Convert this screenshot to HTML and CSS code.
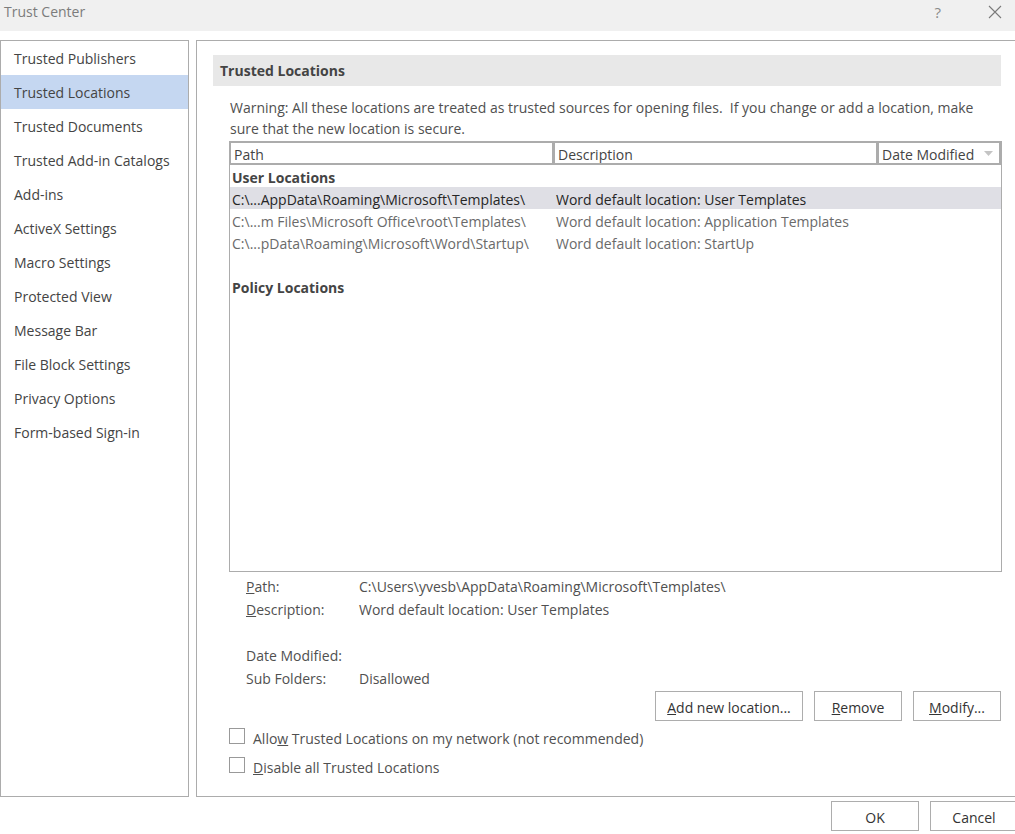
FILE: index.html
```html
<!DOCTYPE html>
<html>
<head>
<meta charset="utf-8">
<link rel="stylesheet" href="styles.css">
</head>
<body>
<div class="dialog">
  <div class="titlebar">
    <span class="title">Trust Center</span>
    <span class="help">?</span>
    <svg class="close" width="14" height="14" viewBox="0 0 14 14"><path d="M1 1 L13 13 M13 1 L1 13" stroke="#7a7a7a" stroke-width="1.1" fill="none"/></svg>
  </div>
  <div class="main">
    <nav class="nav">
      <div class="nav-item">Trusted Publishers</div>
      <div class="nav-item selected">Trusted Locations</div>
      <div class="nav-item">Trusted Documents</div>
      <div class="nav-item">Trusted Add-in Catalogs</div>
      <div class="nav-item">Add-ins</div>
      <div class="nav-item">ActiveX Settings</div>
      <div class="nav-item">Macro Settings</div>
      <div class="nav-item">Protected View</div>
      <div class="nav-item">Message Bar</div>
      <div class="nav-item">File Block Settings</div>
      <div class="nav-item">Privacy Options</div>
      <div class="nav-item">Form-based Sign-in</div>
    </nav>
    <section class="content">
      <div class="section-header">Trusted Locations</div>
      <p class="warning">Warning: All these locations are treated as trusted sources for opening files.&nbsp; If you change or add a location, make<br>sure that the new location is secure.</p>
      <div class="table">
        <div class="thead">
          <div class="th th-path">Path</div>
          <div class="th th-desc">Description</div>
          <div class="th th-date">Date Modified<svg class="sort" width="9" height="5" viewBox="0 0 9 5"><path d="M0 0 H9 L4.5 5 Z" fill="#c4c4c4"/></svg></div>
        </div>
        <div class="group">User Locations</div>
        <div class="row selected"><span class="c-path">C:\...AppData\Roaming\Microsoft\Templates\</span><span class="c-desc">Word default location: User Templates</span></div>
        <div class="row"><span class="c-path">C:\...m Files\Microsoft Office\root\Templates\</span><span class="c-desc">Word default location: Application Templates</span></div>
        <div class="row"><span class="c-path">C:\...pData\Roaming\Microsoft\Word\Startup\</span><span class="c-desc">Word default location: StartUp</span></div>
        <div class="row"></div>
        <div class="group">Policy Locations</div>
      </div>
      <div class="details">
        <div class="d-label"><u>P</u>ath:</div><div class="d-value">C:\Users\yvesb\AppData\Roaming\Microsoft\Templates\</div>
        <div class="d-label"><u>D</u>escription:</div><div class="d-value">Word default location: User Templates</div>
        <div class="d-label">&nbsp;</div><div class="d-value"></div>
        <div class="d-label">Date Modified:</div><div class="d-value"></div>
        <div class="d-label">Sub Folders:</div><div class="d-value">Disallowed</div>
      </div>
      <div class="actions">
        <button class="btn btn-wide"><u>A</u>dd new location...</button>
        <button class="btn"><u>R</u>emove</button>
        <button class="btn"><u>M</u>odify...</button>
      </div>
      <label class="check"><span class="box"></span><span class="check-text">Allo<u>w</u> Trusted Locations on my network (not recommended)</span></label>
      <label class="check"><span class="box"></span><span class="check-text"><u>D</u>isable all Trusted Locations</span></label>
    </section>
  </div>
  <div class="footer">
    <button class="btn">OK</button>
    <button class="btn">Cancel</button>
  </div>
</div>
</body>
</html>
```
FILE: styles.css
```css
html, body {
  margin: 0;
  padding: 0;
  background: #ffffff;
  overflow: hidden;
}
body {
  width: 1015px;
  height: 834px;
  font-family: "Open Sans", "Noto Sans", "Liberation Sans", sans-serif;
  font-size: 14px;
  color: #444444;
}
.dialog {
  width: 1018px;
}
.titlebar {
  height: 31px;
  background: #f0f0f0;
  display: flex;
  align-items: flex-start;
  padding: 2px 0 0 4px;
  box-sizing: border-box;
}
.title {
  color: #7c7c7c;
  flex: 1;
}
.help {
  color: #8a8a8a;
  font-size: 15px;
  margin-right: 47px;
}
.close {
  margin-right: 16px;
  margin-top: 3px;
}
.main {
  display: flex;
  margin-top: 9px;
  gap: 7px;
}
.nav {
  width: 189px;
  height: 757px;
  box-sizing: border-box;
  border: 1px solid #acacac;
  flex: none;
}
.nav-item {
  height: 34px;
  box-sizing: border-box;
  padding: 2px 0 0 13px;
  line-height: 32px;
  color: #444444;
  white-space: nowrap;
}
.nav-item.selected {
  background: #c5d7f1;
}
.content {
  width: 830px;
  height: 757px;
  box-sizing: border-box;
  border: 1px solid #acacac;
  padding: 14px 0 0 16px;
  flex: none;
}
.section-header {
  width: 788px;
  height: 31px;
  line-height: 31px;
  background: #e8e8e8;
  font-weight: bold;
  color: #444444;
  padding-left: 7px;
  box-sizing: border-box;
}
.warning {
  margin: 11px 0 0 17px;
  line-height: 21px;
  color: #505050;
  white-space: nowrap;
}
.table {
  margin: 2px 0 0 16px;
  width: 773px;
  height: 431px;
  box-sizing: border-box;
  border: 1px solid #acacac;
  border-top: none;
}
.thead {
  display: flex;
  background: #acacac;
  padding: 2px 1px 1px 1px;
  gap: 3px;
  height: 24px;
  box-sizing: border-box;
}
.th {
  background: #ffffff;
  height: 20px;
  line-height: 20px;
  padding: 2px 0 0 3px;
  box-sizing: border-box;
  color: #444444;
  white-space: nowrap;
  overflow: hidden;
}
.th-path { width: 321px; }
.th-desc { width: 321px; }
.th-date {
  width: 120px;
  display: flex;
  align-items: flex-start;
  justify-content: space-between;
  padding-right: 6px;
}
.sort {
  flex: none;
  margin-top: 6px;
}
.group {
  height: 22px;
  box-sizing: border-box;
  padding: 2px 0 0 2px;
  line-height: 22px;
  font-weight: bold;
  color: #444444;
}
.row {
  height: 22px;
  box-sizing: border-box;
  padding-top: 2px;
  line-height: 22px;
  display: flex;
  color: #6a6a6a;
  white-space: nowrap;
}
.row.selected {
  background: #dfdfe5;
  color: #262626;
}
.c-path {
  width: 326px;
  padding-left: 2px;
  box-sizing: border-box;
}
.details {
  display: grid;
  grid-template-columns: 113px 1fr;
  margin: 3px 0 0 33px;
  line-height: 23px;
  color: #505050;
}
.actions {
  display: flex;
  justify-content: flex-end;
  gap: 11px;
  width: 788px;
  margin-top: 1px;
}
.btn {
  font-family: inherit;
  font-size: 14px;
  color: #333333;
  background: #ffffff;
  border: 1px solid #adadad;
  width: 88px;
  height: 30px;
  padding: 2px 0 0 0;
  border-radius: 0;
}
.btn-wide {
  width: 148px;
}
.check {
  display: flex;
  align-items: flex-start;
  height: 29px;
  margin-left: 16px;
  gap: 8px;
  color: #505050;
}
.check-text {
  line-height: 19px;
  padding-top: 8px;
}
.box {
  width: 16px;
  height: 16px;
  margin-top: 7px;
  box-sizing: border-box;
  border: 1px solid #999999;
  background: #ffffff;
}
.footer {
  display: flex;
  justify-content: flex-end;
  gap: 11px;
  margin-top: 4px;
}
```
